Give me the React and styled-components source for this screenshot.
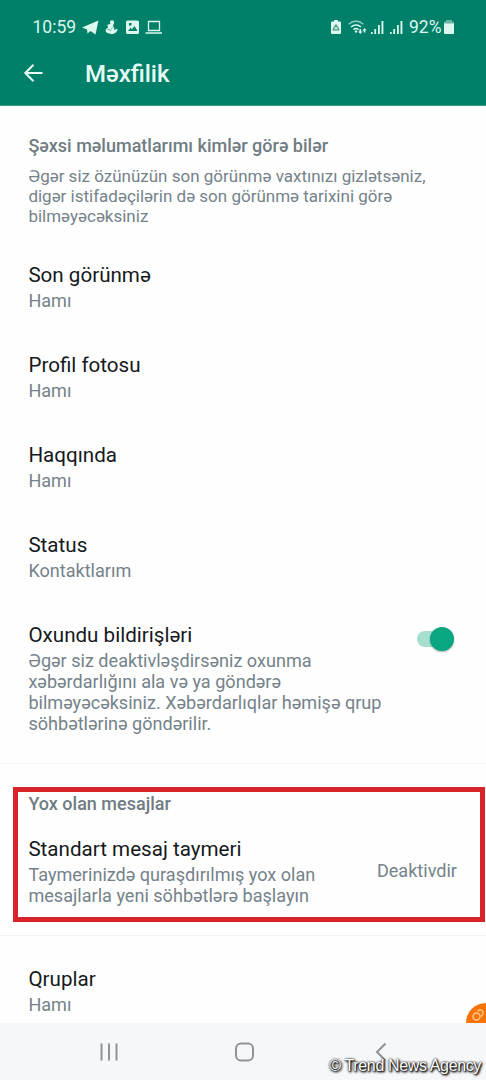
import React from 'react';
import styled, { createGlobalStyle } from 'styled-components';

const Global = createGlobalStyle`
  *{box-sizing:border-box}
  html,body{margin:0;background:#fefefe}
  body{font-family:Roboto,"Noto Sans",sans-serif;-webkit-font-smoothing:antialiased}
`;
const Screen = styled.div`width:486px;height:1080px;position:relative;overflow:hidden;display:flex;flex-direction:column;background:#fefefe;`;
const Header = styled.header`height:106px;flex:none;background:#018069;color:#fff;border-bottom:1px solid #3a9a88;`;
const StatusBar = styled.div`height:54px;padding:0 31px 0 32.5px;display:flex;justify-content:space-between;align-items:center;`;
const Cluster = styled.div`display:flex;align-items:center;color:#dcf7ee;svg{display:block;flex:none}`;
const StatusText = styled.span`width:${p => p.$w}px;padding-left:${p => p.$pl || 0}px;font-size:17.5px;line-height:20px;color:#dcf7ee;white-space:nowrap;`;
const AppBar = styled.div`height:40px;display:flex;align-items:center;padding-left:23px;gap:41px;svg{display:block}`;
const AppTitle = styled.h1`margin:0;font-size:24px;line-height:28px;font-weight:500;color:#e6fbf5;`;
const Content = styled.main`flex:1;min-height:0;overflow:hidden;`;
const Intro = styled.section`padding:30px 28.4px 0;height:144px;`;
const SectionLabel = styled.h2`margin:0;font-size:18px;line-height:20px;font-weight:500;color:#6f7c82;`;
const Copy = styled.p`margin:0;white-space:nowrap;font-size:18.08px;line-height:21px;color:#75828a;`;
const IntroCopy = styled(Copy)`margin-top:10px;font-size:17px;line-height:20px;`;
const TimerValue = styled(Copy)`margin-bottom:3px;`;
const Line = styled.span`display:block;`;
const Row = styled.section`height:${p => p.$h || 90}px;padding:${p => p.$pt || 13}px 28px 0 28.4px;display:flex;justify-content:space-between;`;
const RowTitle = styled.h3`margin:0 0 2px;font-size:20.6px;line-height:25px;font-weight:400;color:#15191c;white-space:nowrap;`;
const Switch = styled.div`
  width:37px;height:24px;margin:4px 4px 0 0;display:flex;align-items:center;
  &::before{content:"";width:30px;height:16px;border-radius:8px;background:#a5e0cf;flex:none}
`;
const Knob = styled.div`width:24px;height:24px;flex:none;margin-left:-17px;border-radius:50%;background:#0aa581;box-shadow:0 1px 2px #0005;`;
const Highlight = styled.section`margin:23px 1px 13px 13px;height:135px;border:5px solid #d9222a;padding:2px 23px 0 10.4px;`;
const Timer = styled.div`display:flex;justify-content:space-between;align-items:center;margin-top:23px;`;
const Divider = styled.hr`margin:0;border:0;height:1px;background:#f3f4f4;`;
const NavBar = styled.nav`height:57px;flex:none;background:#f6f7f9;svg{display:block}`;
const Bubble = styled.div`position:absolute;right:0;top:1003px;svg{display:block}`;
const Credit = styled.div`position:absolute;right:5px;bottom:4px;font:16px/20px "Liberation Sans",sans-serif;letter-spacing:-.36px;color:#fff;white-space:nowrap;text-shadow:1px 1px 2px #000,0 0 2px #000,1px 1px 3px #000;`;

const rows = [
  ['Son görünmə', 'Hamı'],
  ['Profil fotosu', 'Hamı'],
  ['Haqqında', 'Hamı'],
  ['Status', 'Kontaktlarım'],
];

const NoticeIcons = () => (
  <svg width="84" height="20" viewBox="79 17 84 20" fill="currentColor">
    <path d="M82 27.5 98.5 20.5 95.5 34.5 90.5 31 87.5 33.5 87 29.5Z" />
    <path d="M111 20.5c2-.6 3.6.8 3 2.8-.3 1.3-1.3 2-.9 3.200 1.200.8 1.500 2 1 3.500 1.400-.5 2.500-1.200 3.500-1-.3 2.800-2.500 5-6 5-3.700 0-6-1.600-6-3.400 0-1.600 1.500-2 2.800-3.300-1-.7-1.300-1.700-.6-2.800 1.200-.4 1.900-.1 2.600-.6-.6-1.500-.6-2.700.6-3.400Z" />
    <path d="M107.500 29.500q2.500-.3 3.500 1.500M112.500 27.500l-1.500 2" fill="none" stroke="#3b9c88" strokeWidth=".8" />
    <path fillRule="evenodd" d="M127.500 20.500h10q1.500 0 1.500 1.500v10.500q0 1.500-1.500 1.500h-10q-1.500 0-1.500-1.500v-10.500q0-1.500 1.500-1.500ZM128 31h9.500l-3-5-2.600 3.200-1.400-1.400ZM129 23v2.500h2.500v-2.500Z" />
    <path d="M148.500 21.500h11v9h-11ZM145.500 33h16.500" fill="none" stroke="currentColor" strokeWidth="1.300" />
  </svg>
);

const SystemIcons = () => (
  <svg width="77" height="20" viewBox="329 17 77 20" fill="currentColor">
    <path d="M334 20h4v1.500h2q1 0 1 1v10.500q0 1-1 1h-8q-1 0-1-1v-10.500q0-1 1-1h2Z" />
    <path d="M336 24.800 339 29.800H333Z" fill="none" stroke="#4f9c8b" strokeWidth="1.300" strokeLinejoin="round" />
    <g fill="none" stroke="currentColor" strokeWidth="1.500">
      <path d="M348.500 24.300q7.500-6.400 15 0" opacity=".6" />
      <path d="M351 27q5-4 10 0M353.500 29.600q2.500-2 5 0" />
    </g>
    <circle cx="356" cy="31.500" r="1.200" />
    <path d="m360.300 34-2.200-2.600h1.400v-2.400h1.600v2.400h1.400ZM364.500 28l2.100 2.500h-1.300v2h-1.600v-2h-1.300Z" />
    <path d="M371 32h1.700v2H371ZM374.300 29h1.800v5h-1.800ZM378 25h1.800v9H378ZM381.500 21h1.900v13h-1.900ZM390 32h1.700v2H390ZM393.300 29h1.800v5h-1.800ZM397 25h1.800v9H397ZM400.500 21h1.900v13h-1.900Z" />
  </svg>
);

export default function App() {
  return (
    <Screen>
      <Global />
      <Header>
        <StatusBar>
          <Cluster><StatusText $w={46}>10:59</StatusText><NoticeIcons /></Cluster>
          <Cluster>
            <SystemIcons />
            <StatusText $w={37} $pl={3}>92%</StatusText>
            <svg width="12" height="20" viewBox="443 17 12 20">
              <path d="M446 20h6v1.500h1q1 0 1 1V24H444v-1.500q0-1 1-1h1Z" fill="#68b5a4" />
              <path d="M444 23.500h10V33q0 1-1 1h-8q-1 0-1-1Z" fill="currentColor" />
            </svg>
          </Cluster>
        </StatusBar>
        <AppBar>
          <svg width="21" height="20" viewBox="0 0 21 20" fill="none" stroke="#e6fbf5" strokeWidth="2"><path d="M19.500 9H2.500M10.500.8 2.300 9l8.200 8.200" /></svg>
          <AppTitle>Məxfilik</AppTitle>
        </AppBar>
      </Header>
      <Content>
        <Intro>
          <SectionLabel>Şəxsi məlumatlarımı kimlər görə bilər</SectionLabel>
          <IntroCopy>
            <Line>Əgər siz özünüzün son görünmə vaxtınızı gizlətsəniz,</Line>
            <Line>digər istifadəçilərin də son görünmə tarixini görə</Line>
            <Line>bilməyəcəksiniz</Line>
          </IntroCopy>
        </Intro>
        {rows.map(([title, value]) => (
          <Row key={title}><div><RowTitle>{title}</RowTitle><Copy>{value}</Copy></div></Row>
        ))}
        <Row $h={153}>
          <div>
            <RowTitle>Oxundu bildirişləri</RowTitle>
            <Copy>
              <Line>Əgər siz deaktivləşdirsəniz oxunma</Line>
              <Line>xəbərdarlığını ala və ya göndərə</Line>
              <Line>bilməyəcəksiniz. Xəbərdarlıqlar həmişə qrup</Line>
              <Line>söhbətlərinə göndərilir.</Line>
            </Copy>
          </div>
          <Switch><Knob /></Switch>
        </Row>
        <Divider />
        <Highlight>
          <SectionLabel>Yox olan mesajlar</SectionLabel>
          <Timer>
            <div>
              <RowTitle>Standart mesaj taymeri</RowTitle>
              <Copy><Line>Taymerinizdə quraşdırılmış yox olan</Line><Line>mesajlarla yeni söhbətlərə başlayın</Line></Copy>
            </div>
            <TimerValue>Deaktivdir</TimerValue>
          </Timer>
        </Highlight>
        <Divider />
        <Row $pt={31}><div><RowTitle>Qruplar</RowTitle><Copy>Hamı</Copy></div></Row>
      </Content>
      <NavBar>
        <svg width="486" height="57" viewBox="0 1023 486 57" fill="none" stroke="#929395" strokeWidth="2">
          <path d="M101.500 1043.500v17M109 1043.500v17M116.500 1043.500v17M385.500 1043.500 377 1052l8.500 8.500" />
          <rect x="236" y="1043.500" width="17" height="17" rx="5" />
        </svg>
      </NavBar>
      <Bubble>
        <svg width="20" height="20" viewBox="466 1003 20 20">
          <circle cx="486" cy="1023" r="20" fill="#f97406" />
          <g fill="none" stroke="#ffc58f" strokeWidth="1.500"><circle cx="476.500" cy="1016.500" r="3.500" /><path d="M477.500 1011q5-2.500 5.500 1.500 0 3-2 4" /></g>
        </svg>
      </Bubble>
      <Credit>© Trend News Agency</Credit>
    </Screen>
  );
}
